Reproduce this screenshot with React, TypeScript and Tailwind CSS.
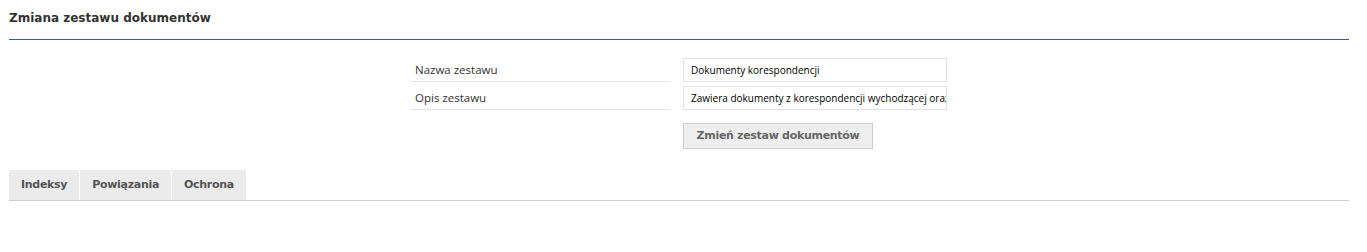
const fields = [
  { label: 'Nazwa zestawu', value: 'Dokumenty korespondencji' },
  { label: 'Opis zestawu', value: 'Zawiera dokumenty z korespondencji wychodzącej oraz przychodzącej' },
]

const tabs = ['Indeksy', 'Powiązania', 'Ochrona']

export default function App() {
  return (
    <div className="ml-[9px] mr-[18px] pt-[10px] text-[#333]">
      <h1 className="font-['DejaVu_Sans',sans-serif] font-bold text-[12px] leading-[16px] h-[29px]">
        Zmiana zestawu dokumentów
      </h1>
      <div className="h-px bg-[#3e5a8a]" />

      <div className="flex justify-center mt-[18px]">
        <div className="flex flex-col gap-[4px]">
          {fields.map((f) => (
            <div key={f.label} className="flex">
              <div className="w-[259px] h-[24px] border-b border-[#e4e4e4] pl-[4px] flex items-center font-['Open_Sans',sans-serif] text-[11.5px]">
                {f.label}
              </div>
              <div className="ml-[13px] w-[264px] h-[24px] border border-[#e2e2e2] px-[7px] flex items-center overflow-hidden whitespace-nowrap font-['Open_Sans',sans-serif] text-[10px] text-black">
                {f.value}
              </div>
            </div>
          ))}
          <div className="flex mt-[9px]">
            <div className="w-[272px]" />
            <button className="w-[190px] h-[26px] bg-[#eee] border border-[#ccc] text-[#666] font-['DejaVu_Sans',sans-serif] font-bold text-[11px] tracking-[-0.3px]">
              Zmień zestaw dokumentów
            </button>
          </div>
        </div>
      </div>

      <div className="mt-[21px] flex gap-px border-b border-[#ccc]">
        {tabs.map((t) => (
          <div
            key={t}
            className="h-[30px] px-[12px] bg-[#ebebeb] flex items-center text-[#555] font-['DejaVu_Sans',sans-serif] font-bold text-[11px] tracking-[-0.3px]"
          >
            {t}
          </div>
        ))}
      </div>
    </div>
  )
}
